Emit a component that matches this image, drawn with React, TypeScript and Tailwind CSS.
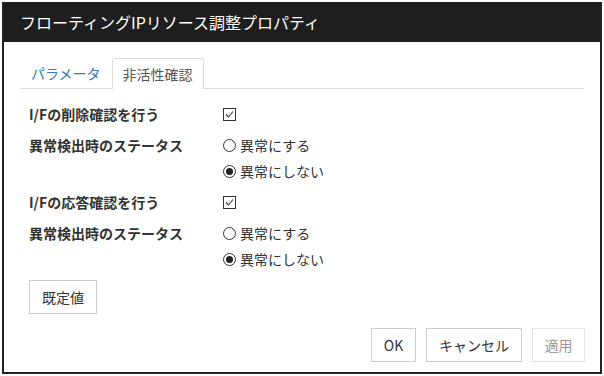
import React from 'react';

const font = { fontFamily: '"Noto Sans CJK JP", "Noto Sans", sans-serif' };

function CheckBox() {
  return (
    <span className="inline-flex h-[13px] w-[13px] items-center justify-center border border-[#333] bg-white">
      <svg width="11" height="11" viewBox="0 0 11 11">
        <path d="M2 5.5 L4.5 8 L9 2.5" fill="none" stroke="#333" strokeWidth="1.1" />
      </svg>
    </span>
  );
}

function Radio({ checked }: { checked?: boolean }) {
  return (
    <span className="inline-flex h-[13px] w-[13px] items-center justify-center rounded-full border border-[#333] bg-white">
      {checked && <span className="h-[7px] w-[7px] rounded-full bg-[#222]" />}
    </span>
  );
}

function RadioOption({ text, checked }: { text: string; checked?: boolean }) {
  return (
    <div className="flex h-[26px] items-center gap-[4px]">
      <Radio checked={checked} />
      <span>{text}</span>
    </div>
  );
}

function Section({ title, first }: { title: string; first?: boolean }) {
  return (
    <>
      <div className={`flex h-[30px] items-center ${first ? '' : 'mt-[3px]'}`}>
        <div className="w-[194px] font-bold">{title}</div>
        <CheckBox />
      </div>
      <div className="mt-[3px] flex">
        <div className="flex h-[26px] w-[194px] items-center font-bold">異常検出時のステータス</div>
        <div className="flex flex-col">
          <RadioOption text="異常にする" />
          <RadioOption text="異常にしない" checked />
        </div>
      </div>
    </>
  );
}

export default function App() {
  return (
    <div className="h-[376px] w-[604px] bg-white p-[2px]" style={font}>
      <div className="flex h-[372px] w-[600px] flex-col border-x-2 border-b-2 border-[#222] text-[14px] text-[#333]">
        {/* header */}
        <div className="flex h-[40px] items-center bg-[#1e1e1e] px-[16px] text-[16px] text-white">
          フローティングIPリソース調整プロパティ
        </div>

        {/* tabs */}
        <div className="mx-[16px] mt-[16px] flex border-b border-[#ddd]">
          <div className="flex h-[30px] items-center px-[11px] text-[#337ab7]">パラメータ</div>
          <div className="-mb-px flex h-[31px] items-center rounded-t-[3px] border border-b-0 border-[#ddd] bg-white px-[10px] text-[#555]">
            非活性確認
          </div>
        </div>

        {/* body */}
        <div className="flex flex-col px-[25px] pt-[10px]">
          <Section title="I/Fの削除確認を行う" first />
          <Section title="I/Fの応答確認を行う" />
          <div className="mt-[8px]">
            <button className="h-[34px] w-[68px] border border-[#ccc] bg-white text-[#333]">既定値</button>
          </div>
        </div>

        {/* footer */}
        <div className="mt-auto mb-[10px] flex justify-end gap-[10px] pr-[15px]">
          <button className="h-[34px] w-[45px] border border-[#ccc] bg-white text-[#333]">OK</button>
          <button className="h-[34px] w-[96px] border border-[#ccc] bg-white text-[#333]">キャンセル</button>
          <button className="h-[34px] w-[53px] border border-[#e3e3e3] bg-white text-[#999]">適用</button>
        </div>
      </div>
    </div>
  );
}
